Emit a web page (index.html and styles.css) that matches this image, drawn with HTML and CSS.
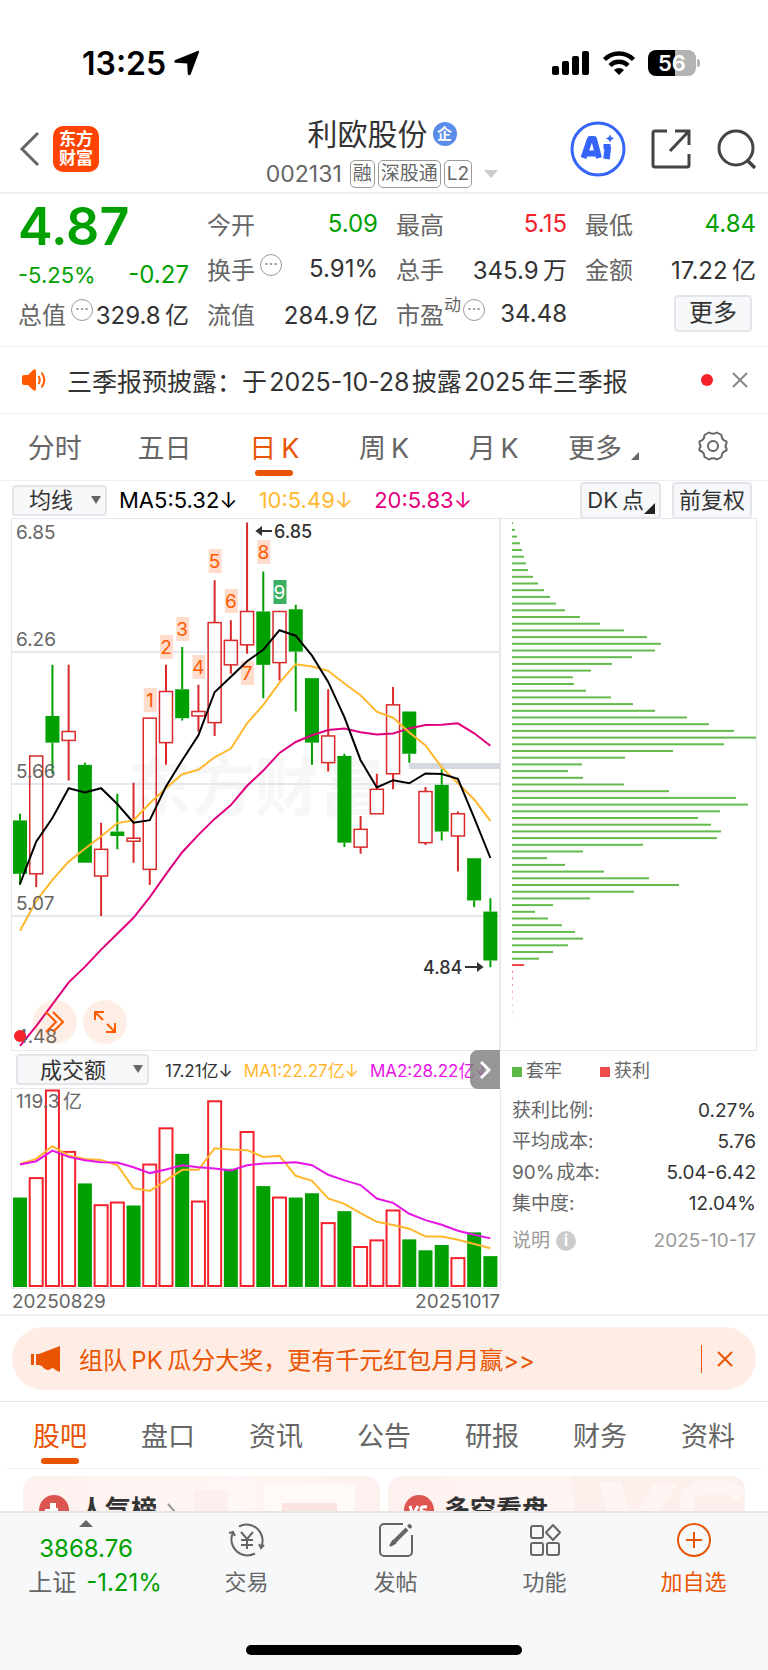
FILE: index.html
```html
<!DOCTYPE html>
<html lang="zh-CN">
<head>
  <meta charset="UTF-8">
  <meta name="viewport" content="width=device-width, initial-scale=1.0">
  <title>利欧股份 002131</title>
  <link rel="stylesheet" href="styles.css">
</head>
<body>
  <div class="app">
    <div class="status-bar">
      <div class="status-time">
        <span>13:25</span>
        <svg width="26" height="26" viewBox="0 0 26 26"><path d="M23.500 1c1-.5 1.900.2 1.500 1.300L16.800 24c-.7 1.700-3 1.500-3.100-.4L13.200 13.500 2 12.800c-2-.1-2.300-2-.7-2.900z" fill="#000"/></svg>
      </div>
      <div class="status-icons">
        <svg width="38" height="26" viewBox="0 0 38 26">
          <rect x="0" y="16" width="7" height="9" rx="2"/><rect x="10" y="11" width="7" height="14" rx="2"/>
          <rect x="20" y="6" width="7" height="19" rx="2"/><rect x="30" y="1" width="7" height="24" rx="2"/>
        </svg>
        <svg width="34" height="26" viewBox="0 0 34 26" fill="none" stroke="#000" stroke-width="4.500">
          <path d="M2.500 9.500a20.500 20.500 0 0 1 29 0"/><path d="M8 15.500a12.700 12.700 0 0 1 18 0"/>
          <path d="M17 25l-5-5a7 7 0 0 1 10 0z" fill="#000" stroke="none"/>
        </svg>
        <div class="battery"><span>56</span></div>
      </div>
    </div>

    <header class="title-bar">
      <div class="title-left">
        <a class="icon-link" href="#" aria-label="返回">
          <svg width="22" height="36" viewBox="0 0 22 36" fill="none" stroke="#666" stroke-width="3"><path d="M20 2L4 18l16 16"/></svg>
        </a>
        <a class="logo" href="#"><span>东方</span><span>财富</span></a>
      </div>
      <div class="title-center">
        <div class="stock-name"><h1>利欧股份</h1><span class="ent-badge">企</span></div>
        <div class="stock-code">
          <span>002131</span>
          <div class="code-tags"><span>融</span><span>深股通</span><span>L2</span></div>
          <i class="caret"></i>
        </div>
      </div>
      <div class="title-right">
        <button class="icon-btn" type="button" aria-label="AI">
          <svg width="56" height="56" viewBox="0 0 56 56" fill="none" stroke="#3565f8">
            <circle cx="28" cy="28" r="26" stroke-width="3"/>
            <path d="M13.500 37L20 18h4l5 19M16 32.500h11" stroke-width="6" stroke-linejoin="round"/>
            <path d="M38 25.500l-1.500 12.500" stroke-width="6.500"/><path d="M33.500 25.500h7" stroke-width="5"/>
            <path d="M40 13c.7 2.800 1.500 3.600 4.500 4.500-3 .9-3.800 1.700-4.500 4.500-.7-2.800-1.500-3.600-4.500-4.500 3-.9 3.800-1.700 4.500-4.500z" fill="#3565f8" stroke="none"/>
          </svg>
        </button>
        <button class="icon-btn" type="button" aria-label="分享">
          <svg width="40" height="40" viewBox="0 0 40 40" fill="none" stroke="#444" stroke-width="3">
            <path d="M16 2H4a2 2 0 0 0-2 2v32a2 2 0 0 0 2 2h32a2 2 0 0 0 2-2V25"/><path d="M24 2h14v14M37 3L19 22"/>
          </svg>
        </button>
        <button class="icon-btn" type="button" aria-label="搜索">
          <svg width="40" height="40" viewBox="0 0 40 40" fill="none" stroke="#444" stroke-width="3">
            <circle cx="20" cy="19" r="17"/><path d="M31 31l8 8" stroke-width="3.500"/>
          </svg>
        </button>
      </div>
    </header>

    <main class="content">
      <section class="quote">
        <div class="quote-col">
          <div class="price down">4.87</div>
          <div class="quote-change down"><span>-5.25%</span><b>-0.27</b></div>
          <div class="quote-row"><label>总值</label><i class="more-dot">···</i><b>329.8&thinsp;亿</b></div>
        </div>
        <div class="quote-col">
          <div class="quote-row"><label>今开</label><b class="down">5.09</b></div>
          <div class="quote-row"><label>换手</label><i class="more-dot">···</i><b>5.91%</b></div>
          <div class="quote-row"><label>流值</label><b>284.9&thinsp;亿</b></div>
        </div>
        <div class="quote-col">
          <div class="quote-row"><label>最高</label><b class="up">5.15</b></div>
          <div class="quote-row"><label>总手</label><b>345.9&thinsp;万</b></div>
          <div class="quote-row"><label>市盈</label><sup>动</sup><i class="more-dot tight">···</i><b>34.48</b></div>
        </div>
        <div class="quote-col">
          <div class="quote-row"><label>最低</label><b class="down">4.84</b></div>
          <div class="quote-row"><label>金额</label><b>17.22&thinsp;亿</b></div>
          <div class="quote-row"><button class="box-btn quote-more" type="button">更多</button></div>
        </div>
      </section>

      <section class="notice">
        <svg width="26" height="24" viewBox="0 0 26 24" fill="none" stroke="#ff5a00" stroke-width="2">
          <path d="M1 9q0-2 2-2h4l5-5q3-2 3 1v18q0 3-3 1l-5-5H3q-2 0-2-2z" fill="#ff5a00" stroke="none"/>
          <path d="M17.500 8q2.500 4 0 8M20.500 4.500q5.500 7.500 0 15"/>
        </svg>
        <p>三季报预披露：于&hairsp;2025-10-28&hairsp;披露&hairsp;2025&hairsp;年三季报</p>
        <i class="red-dot"></i>
        <button class="icon-btn" type="button" aria-label="关闭公告">
          <svg width="16" height="16" viewBox="0 0 16 16" stroke="#888" stroke-width="2"><path d="M1 1l14 14M15 1L1 15"/></svg>
        </button>
      </section>

      <nav class="tabs period-tabs">
        <button type="button">分时</button>
        <button type="button">五日</button>
        <button type="button" class="active">日&thinsp;K</button>
        <button type="button">周&thinsp;K</button>
        <button type="button">月&thinsp;K</button>
        <button type="button">更多<i class="corner"></i></button>
        <button type="button" aria-label="设置">
          <svg width="32" height="32" viewBox="0 0 32 32" fill="none" stroke="#666" stroke-width="2" stroke-linejoin="round">
            <path d="M12 2.500q4 2.500 8 0l4.500 2.500q0 5 5 6.500v2q-2 2.500 0 5v2q-5 1.500-5 6.500L20 29.500q-4-2.500-8 0L7.500 27q0-5-5-6.500v-2q2-2.500 0-5v-2q5-1.500 5-6.500z"/>
            <circle cx="16" cy="16" r="5"/>
          </svg>
        </button>
      </nav>

      <section class="ma-bar">
        <div class="select-wrap ma-select">
          <select aria-label="主图指标"><option>均线</option></select>
        </div>
        <span class="c-ma5">MA5:5.32<i>↓</i></span>
        <span class="c-ma10">10:5.49<i>↓</i></span>
        <span class="c-ma20">20:5.83<i>↓</i></span>
        <div class="ma-actions">
          <button class="box-btn dk-btn" type="button">DK&thinsp;点<i class="corner dark"></i></button>
          <button class="box-btn" type="button">前复权</button>
        </div>
      </section>

      <section class="charts">
        <div class="charts-left">
          <div class="kline">
            <svg id="kline" viewBox="0 0 488 531"></svg>
            <button class="round-btn" type="button" aria-label="展开">
              <svg width="20" height="24" viewBox="0 0 20 24" fill="none" stroke="#ff5a00" stroke-width="2"><path d="M1 2l10 10L1 22M8 2l10 10L8 22"/></svg>
            </button>
            <button class="round-btn second" type="button" aria-label="全屏">
              <svg width="24" height="24" viewBox="0 0 24 24" fill="none" stroke="#ff5a00" stroke-width="2"><path d="M2 10V2h9M2 2l8 8M22 13v9h-9M22 22l-8-8"/></svg>
            </button>
          </div>
          <div class="vol-bar">
            <div class="select-wrap vol-select">
              <select aria-label="副图指标"><option>成交额</option></select>
            </div>
            <span>17.21亿↓</span>
            <span class="c-ma10">MA1:22.27亿↓</span>
            <span class="c-vol2">MA2:28.22亿↓</span>
            <button class="vol-next" type="button" aria-label="下一个">
              <svg width="12" height="20" viewBox="0 0 12 20" fill="none" stroke="#fff" stroke-width="3"><path d="M2 2l8 8-8 8"/></svg>
            </button>
          </div>
          <svg id="volume" class="volume" viewBox="0 0 488 199"></svg>
          <div class="dates"><span>20250829</span><span>20251017</span></div>
        </div>

        <div class="charts-right">
          <svg id="chips" class="chips" viewBox="0 0 256 531"></svg>
          <div class="chip-info">
            <div class="legend"><span class="lg-green">套牢</span><span class="lg-red">获利</span></div>
            <dl>
              <div><dt>获利比例:</dt><dd>0.27%</dd></div>
              <div><dt>平均成本:</dt><dd>5.76</dd></div>
              <div><dt>90%&hairsp;成本:</dt><dd>5.04-6.42</dd></div>
              <div><dt>集中度:</dt><dd>12.04%</dd></div>
            </dl>
            <div class="chip-note"><span>说明</span><i>i</i><time>2025-10-17</time></div>
          </div>
        </div>
      </section>

      <section class="promo-wrap">
        <div class="promo">
          <svg width="30" height="26" viewBox="0 0 30 26" fill="#ea5504">
            <rect x="0" y="8" width="3" height="11"/><path d="M5 8h3L29 0v26l-5-2v-1l-3-1q-3 3-6 1.500T11 20l-3-1H5z"/>
          </svg>
          <a href="#">组队&thinsp;PK&thinsp;瓜分大奖，更有千元红包月月赢&gt;&gt;</a>
          <button type="button" aria-label="关闭">
            <svg width="16" height="16" viewBox="0 0 16 16" stroke="#ea5504" stroke-width="2"><path d="M1 1l14 14M15 1L1 15"/></svg>
          </button>
        </div>
      </section>

      <nav class="tabs info-tabs">
        <button type="button" class="active">股吧</button>
        <button type="button">盘口</button>
        <button type="button">资讯</button>
        <button type="button">公告</button>
        <button type="button">研报</button>
        <button type="button">财务</button>
        <button type="button">资料</button>
      </nav>

      <section class="cards">
        <a class="card" href="#">
          <svg class="card-art" width="210" height="60" viewBox="0 0 210 60"><path d="M24 14h34v46H24z" fill="#fdefed"/><path d="M95 8h90v52H95z" fill="#fff9f7"/><path d="M112 27h55v33h-55z" fill="#fbe3e0"/></svg>
          <svg width="30" height="30" viewBox="0 0 30 30"><circle cx="15" cy="15" r="15" fill="#dd5550"/><path d="M6 22v-8h5V8h6v5h2v3h5v6z" fill="#fff"/></svg>
          <b>人气榜</b>
          <svg width="10" height="18" viewBox="0 0 10 18" fill="none" stroke="#999" stroke-width="2"><path d="M1 1l7 8-7 8"/></svg>
        </a>
        <a class="card" href="#">
          <svg class="card-art" width="180" height="60" viewBox="0 0 180 60"><path d="M5 0h175v60H14z" fill="#fdefec"/><path d="M34 6h22l12 40L88 8h24L78 60H48z" fill="#fff6f4"/><path d="M176 20q-10-12-32-10t-22 18 20 20" fill="none" stroke="#fff6f4" stroke-width="14"/></svg>
          <svg width="30" height="30" viewBox="0 0 30 30" fill="none" stroke="#fff" stroke-width="3"><circle cx="15" cy="15" r="15" fill="#dd5550" stroke="none"/><path d="M6 11l3 9 5-9M23 12q-6-1-6 2t4 3-1 4h-5"/></svg>
          <b>多空看盘</b>
        </a>
      </section>
    </main>

    <footer class="bottom">
      <nav class="bottom-nav">
        <a class="index-item" href="#">
          <i class="caret-up"></i>
          <span class="down">3868.76</span>
          <span class="index-change">上证<em class="down">-1.21%</em></span>
        </a>
        <a href="#">
          <svg width="40" height="36" viewBox="0 0 40 36" fill="none" stroke="#666" stroke-width="2">
            <path d="M12 4.500a16 16 0 0 1 22 21M28 31.500a16 16 0 0 1-22-21"/><path d="M2 11l4-1 2 4M37 23l-3 3-2-4"/>
            <path d="M14 10l6 7 6-7M20 17v10M14 18h12M14 23h12"/>
          </svg>
          <span>交易</span>
        </a>
        <a href="#">
          <svg width="36" height="36" viewBox="0 0 36 36" fill="none" stroke="#666" stroke-width="2">
            <path d="M25 2H6a4 4 0 0 0-4 4v24a4 4 0 0 0 4 4h24a4 4 0 0 0 4-4V13"/><path d="M14 22L29 7" stroke-width="4"/><path d="M30.500 5.500l2.500-2.500" stroke-width="4"/><path d="M12 24l3-5 2 2z" fill="#666"/>
          </svg>
          <span>发帖</span>
        </a>
        <a href="#">
          <svg width="34" height="36" viewBox="0 0 34 36" fill="none" stroke="#666" stroke-width="2">
            <rect x="3" y="4" width="12" height="12" rx="2"/><rect x="3" y="21" width="12" height="12" rx="2"/><rect x="19" y="21" width="12" height="12" rx="2"/><path d="M25 3l7 7.500-7 7.500-7-7.500z" stroke-linejoin="round"/>
          </svg>
          <span>功能</span>
        </a>
        <a class="add" href="#">
          <svg width="36" height="36" viewBox="0 0 36 36" fill="none" stroke="#ea5504" stroke-width="2"><circle cx="18" cy="18" r="16"/><path d="M18 10v16M10 18h16"/></svg>
          <span>加自选</span>
        </a>
      </nav>
      <div class="home-indicator"></div>
    </footer>
  </div>
  <script src="script.js"></script>
</body>
</html>
```

FILE: styles.css
```css
* {
  box-sizing: border-box;
}

body {
  margin: 0;
  background: #fff;
  color: #333;
  font-family: Inter, "Noto Sans CJK SC", sans-serif;
  font-size: 24px;
}

h1, p, dl, dd {
  margin: 0;
}

b, i, em {
  font-weight: 400;
  font-style: normal;
}

a {
  color: inherit;
  text-decoration: none;
}

button, select {
  font: inherit;
  color: inherit;
  border: none;
  background: none;
  padding: 0;
  cursor: pointer;
}

svg {
  display: block;
  flex: none;
}

.app {
  height: 100vh;
  display: flex;
  flex-direction: column;
}

.down { color: #00a000; }
.up { color: #f5222d; }
.c-ma5 { color: #000; }
.c-ma10 { color: #ffb82e; }
.c-ma20 { color: #e6007e; }
.c-vol2 { color: #e614e6; }

/* status bar */
.status-bar {
  height: 106px;
  padding: 20px 72px 0 82px;
  display: flex;
  align-items: center;
  justify-content: space-between;
}

.status-time,
.status-icons {
  display: flex;
  align-items: center;
  gap: 8px;
  color: #000;
  font-size: 32px;
  font-weight: 600;
}

.status-icons {
  gap: 12px;
}

.battery {
  position: relative;
  width: 48px;
  height: 26px;
  border-radius: 8px;
  background: linear-gradient(to right, #000 56%, #b3b3b3 56%);
  color: #fff;
  font-size: 22px;
  line-height: 26px;
  text-align: center;
}

.battery::after {
  content: "";
  position: absolute;
  right: -4px;
  top: 9px;
  width: 3px;
  height: 8px;
  border-radius: 0 3px 3px 0;
  background: #b3b3b3;
}

/* title bar */
.title-bar {
  height: 88px;
  padding: 0 12px 0 18px;
  display: grid;
  grid-template-columns: 1fr auto 1fr;
  align-items: center;
  border-bottom: 2px solid #eee;
}

.title-left {
  display: flex;
  align-items: center;
  gap: 13px;
}

.logo {
  width: 46px;
  height: 46px;
  border-radius: 10px;
  background: #ff4400;
  color: #fff;
  font-size: 17px;
  font-weight: 700;
  line-height: 19px;
  display: flex;
  flex-direction: column;
  align-items: center;
  justify-content: center;
}

.title-center {
  display: flex;
  flex-direction: column;
  align-items: center;
  gap: 7px;
  margin-right: 10px;
  padding-top: 5px;
}

.stock-name {
  display: flex;
  align-items: center;
  gap: 5px;
}

.stock-name h1 {
  font-size: 30px;
  font-weight: 400;
  line-height: 38px;
}

.ent-badge {
  width: 24px;
  height: 24px;
  border-radius: 50%;
  background: #5a8cea;
  color: #fff;
  font-size: 15px;
  font-weight: 700;
  line-height: 23px;
  text-align: center;
}

.stock-code {
  display: flex;
  align-items: center;
  gap: 8px;
  color: #666;
  font-size: 23px;
}

.code-tags {
  display: flex;
  gap: 3px;
}

.code-tags span {
  border: 1px solid #999;
  border-radius: 5px;
  padding: 0 2px;
  font-size: 19px;
  line-height: 26px;
}

.caret {
  margin-left: 4px;
  border: 7px solid transparent;
  border-top: 8px solid #ccc;
  border-bottom: none;
}

.title-right {
  display: flex;
  align-items: center;
  justify-content: flex-end;
  gap: 25px;
}

.content {
  flex: 1;
  min-height: 0;
  overflow: hidden;
}

/* quote */
.quote {
  display: grid;
  grid-template-columns: repeat(4, 1fr);
  gap: 18px;
  padding: 7px 12px 10px 18px;
  border-bottom: 1px solid #eee;
}

.quote-row {
  height: 45px;
  display: flex;
  align-items: center;
}

.quote-row label {
  color: #666;
}

.quote-row b {
  margin-left: auto;
}

.quote-row sup {
  align-self: flex-start;
  color: #666;
  font-size: 17px;
  line-height: 28px;
}

.more-dot {
  width: 22px;
  height: 22px;
  margin: 0 0 8px 5px;
  border: 1px solid #999;
  border-radius: 50%;
  color: #888;
  font-size: 16px;
  line-height: 19px;
  text-align: center;
}

.more-dot.tight {
  margin-left: 2px;
}

.price {
  height: 50px;
  font-size: 52px;
  font-weight: 600;
  line-height: 52px;
}

.quote-change {
  height: 40px;
  padding-top: 7px;
  display: flex;
  align-items: center;
  justify-content: space-between;
  font-size: 22px;
}

.quote-change b {
  font-size: 24px;
}

.box-btn {
  border: 2px solid #e3e5ea;
  border-radius: 4px;
  background: #f7f8fa;
  padding: 0 5px 3px;
  height: 37px;
  line-height: 32px;
  white-space: nowrap;
}

.quote-more {
  width: 78px;
  margin: 0 4px 0 auto;
}

/* notice */
.notice {
  height: 67px;
  padding: 0 20px 0 21px;
  display: flex;
  align-items: center;
  border-bottom: 1px solid #eee;
  font-size: 25px;
}

.notice p {
  flex: 1;
  margin-left: 20px;
}

.red-dot {
  width: 12px;
  height: 12px;
  margin-right: 19px;
  border-radius: 50%;
  background: #f5222d;
}

/* tabs */
.tabs {
  display: flex;
  height: 67px;
  border-bottom: 1px solid #eee;
  color: #666;
  font-size: 27px;
}

.tabs button {
  position: relative;
  flex: 1;
  display: flex;
  align-items: center;
  justify-content: center;
  padding-bottom: 2px;
}

.tabs .active {
  color: #ea5504;
}

.tabs .active::after {
  content: "";
  position: absolute;
  left: calc(50% - 19px);
  bottom: 4px;
  width: 38px;
  height: 6px;
  border-radius: 3px;
  background: #ea5504;
}

.corner {
  align-self: flex-end;
  margin: 0 0 18px 9px;
  border-left: 8px solid transparent;
  border-bottom: 8px solid #666;
}

/* indicator bar */
.ma-bar {
  height: 38px;
  padding: 0 16px 0 12px;
  display: flex;
  align-items: center;
  gap: 21px;
  font-size: 22px;
}

.ma-bar > span {
  display: flex;
  white-space: nowrap;
}

.select-wrap {
  position: relative;
  height: 31px;
}

.select-wrap::after {
  content: "";
  position: absolute;
  right: 6px;
  top: 11px;
  border: 5px solid transparent;
  border-top: 8px solid #666;
  border-bottom: none;
  pointer-events: none;
}

.select-wrap select {
  appearance: none;
  width: 100%;
  height: 100%;
  border: 2px solid #e3e5ea;
  border-radius: 4px;
  background: #f7f8fa;
  font-size: 22px;
}

.ma-select {
  width: 95px;
  margin-right: -9px;
}

.ma-select select {
  padding-left: 15px;
}

.ma-actions {
  margin-left: auto;
  display: flex;
  gap: 11px;
}

.dk-btn {
  position: relative;
  padding-right: 15px;
}

.corner.dark {
  position: absolute;
  right: 4px;
  bottom: 3px;
  margin: 0;
  border-left-width: 11px;
  border-bottom: 11px solid #222;
}

/* charts */
.charts {
  display: grid;
  grid-template-columns: 61fr 32fr;
  padding: 0 12px;
  border-bottom: 2px solid #eee;
}

.charts-left,
.charts-right {
  min-width: 0;
}

.kline {
  position: relative;
  outline: 1px solid #e6e8ec;
}

.kline svg,
.volume,
.chips {
  overflow: visible;
}

#kline,
.volume,
.chips {
  width: 100%;
}

.volume,
.chips {
  outline: 1px solid #e6e8ec;
}

.round-btn {
  position: absolute;
  left: 21px;
  bottom: 6px;
  width: 44px;
  height: 44px;
  border-radius: 50%;
  background: rgba(255, 90, 0, 0.1);
  display: flex;
  align-items: center;
  justify-content: center;
}

.round-btn.second {
  left: 71px;
}

.vol-bar {
  position: relative;
  height: 39px;
  padding-left: 4px;
  display: flex;
  align-items: center;
  gap: 11px;
  overflow: hidden;
  font-size: 17px;
  white-space: nowrap;
}

.vol-select {
  flex: none;
  width: 133px;
  margin-right: 5px;
}

.vol-select select {
  padding-left: 22px;
}

.vol-next {
  position: absolute;
  right: 0;
  top: 0;
  width: 30px;
  height: 39px;
  border-radius: 8px 0 0 8px;
  background: rgba(128, 128, 128, 0.82);
  display: flex;
  align-items: center;
  justify-content: center;
}

.dates {
  height: 26px;
  display: flex;
  align-items: center;
  justify-content: space-between;
  color: #666;
  font-size: 19px;
}

.chip-info {
  padding: 7px 0 0 12px;
  font-size: 19px;
  line-height: 31px;
}

.legend {
  display: flex;
  gap: 38px;
  height: 38px;
  color: #666;
  font-size: 18px;
  line-height: 28px;
}

.legend span::before {
  content: "";
  display: inline-block;
  width: 10px;
  height: 10px;
  margin-right: 4px;
  background: #5cb946;
}

.legend .lg-red::before {
  background: #ee4b4b;
}

.chip-info dl div,
.chip-note {
  display: flex;
  align-items: center;
  justify-content: space-between;
}

.chip-info dt {
  color: #666;
}

.chip-note {
  margin-top: 6px;
  color: #999;
}

.chip-note time {
  margin-left: auto;
}

.chip-note i {
  width: 20px;
  height: 20px;
  margin-left: 6px;
  border-radius: 50%;
  background: #ccc;
  color: #fff;
  font-size: 15px;
  font-weight: 700;
  line-height: 20px;
  text-align: center;
}

/* promo */
.promo-wrap {
  padding: 11px 12px 11px;
  border-bottom: 1px solid #e6e6e6;
}

.promo {
  height: 63px;
  padding: 0 23px 0 19px;
  border-radius: 32px;
  background: #fdede4;
  color: #ea5504;
  display: flex;
  align-items: center;
  gap: 18px;
}

.promo a {
  flex: 1;
}

.promo button {
  height: 28px;
  padding-left: 15px;
  border-left: 1px solid #ea5504;
}

.info-tabs {
  margin: 0 6px;
}

/* cards */
.cards {
  display: grid;
  grid-template-columns: 1fr 1fr;
  gap: 8px;
  padding: 7px 23px;
}

.card {
  position: relative;
  height: 120px;
  padding: 11px 16px;
  border-radius: 14px;
  background: linear-gradient(to right, #fef1ef, #fff7f5 60%, #fef0ee);
  overflow: hidden;
  display: flex;
  align-items: flex-start;
  gap: 10px;
}

.card > * {
  position: relative;
}

.card svg {
  margin-top: 8px;
}

.card .card-art {
  position: absolute;
  right: 0;
  top: 0;
  margin: 0;
}

.card b {
  font-size: 26px;
  font-weight: 700;
  line-height: 46px;
}

.card b + svg {
  margin-top: 16px;
}

/* bottom */
.bottom {
  border-top: 2px solid #e6e6e8;
  background: #f7f8fa;
}

.bottom-nav {
  display: grid;
  grid-template-columns: 172px repeat(4, 1fr);
  height: 132px;
  color: #666;
  font-size: 22px;
}

.bottom-nav a {
  display: flex;
  flex-direction: column;
  align-items: center;
  padding-top: 9px;
  line-height: 32px;
}

.bottom-nav svg {
  margin-bottom: 8px;
}

.bottom-nav .index-item {
  padding-top: 7px;
  font-size: 24px;
  line-height: 34px;
}

.index-change {
  padding-left: 18px;
}

.index-item em {
  margin-left: 10px;
}

.bottom-nav .add {
  color: #ea5504;
}

.caret-up {
  margin-bottom: 5px;
  border: 7px solid transparent;
  border-top: none;
  border-bottom: 7px solid #666;
}

.home-indicator {
  width: 36%;
  height: 10px;
  margin: 0 auto 15px;
  border-radius: 5px;
  background: #000;
}
```

FILE: script.js
```js
// open, close, high, low
const candles = [
  [5.50, 5.26, 5.53, 5.21], [5.26, 5.79, 5.79, 5.20], [5.97, 5.85, 6.20, 5.71], [5.86, 5.90, 6.20, 5.68],
  [5.75, 5.31, 5.76, 5.31], [5.25, 5.37, 5.49, 5.07], [5.45, 5.43, 5.62, 5.37], [5.41, 5.42, 5.67, 5.31],
  [5.28, 5.96, 5.96, 5.21], [5.85, 6.08, 6.20, 5.75], [6.09, 5.96, 6.28, 5.95], [5.97, 5.99, 6.11, 5.90],
  [5.94, 6.39, 6.58, 5.88], [6.20, 6.31, 6.40, 6.16], [6.29, 6.44, 6.84, 6.25], [6.44, 6.20, 6.62, 6.05],
  [6.21, 6.44, 6.44, 6.13], [6.45, 6.26, 6.47, 5.99], [6.14, 5.85, 6.14, 5.75], [5.76, 5.88, 6.09, 5.72],
  [5.79, 5.40, 5.80, 5.38], [5.38, 5.46, 5.52, 5.35], [5.53, 5.64, 5.71, 5.53], [5.71, 6.02, 6.10, 5.64],
  [5.99, 5.80, 5.99, 5.76], [5.40, 5.63, 5.65, 5.39], [5.66, 5.45, 5.73, 5.41], [5.43, 5.53, 5.54, 5.27],
  [5.33, 5.14, 5.33, 5.11], [5.09, 4.87, 5.15, 4.84]
];

const ma5 = [5.214, 5.405, 5.511, 5.645, 5.626, 5.645, 5.574, 5.490, 5.501, 5.653, 5.771, 5.883, 6.077, 6.146, 6.216,
  6.268, 6.356, 6.331, 6.241, 6.123, 5.965, 5.771, 5.648, 5.681, 5.667, 5.711, 5.709, 5.687, 5.512, 5.331];
const ma10 = [5.004, 5.137, 5.233, 5.315, 5.373, 5.428, 5.488, 5.501, 5.577, 5.645, 5.708, 5.728, 5.784, 5.823, 5.937,
  6.020, 6.120, 6.203, 6.192, 6.173, 6.116, 6.063, 5.989, 5.962, 5.896, 5.837, 5.739, 5.667, 5.594, 5.498];
const ma20 = [4.486, 4.575, 4.673, 4.772, 4.841, 4.919, 4.990, 5.062, 5.155, 5.258, 5.357, 5.435, 5.507, 5.569, 5.656,
  5.724, 5.804, 5.853, 5.883, 5.907, 5.913, 5.897, 5.886, 5.891, 5.914, 5.929, 5.930, 5.937, 5.892, 5.836];

// turnover, negative = down bar
const volumes = [-53.9, 66.2, 119, 82, -62.4, 49.9, 51.5, -49.1, 74.4, 96.2, -80.2, 52.1, 112.5, -71.2, 94,
  -60.8, 54.5, -53.9, -56.5, 39.1, -45.7, 24.7, 28.7, 46.7, -28.7, -22.1, -25.3, 18, -32.9, -18.6];
const vma1 = [74.2, 77.2, 84.8, 79.2, 77.2, 76.6, 73.4, 59.5, 57.9, 64.2, 70.6, 70.6, 83.6, 82.8, 82.4,
  78.4, 79, 67, 64, 53.3, 50.1, 44.5, 39.3, 37.3, 35.1, 30.5, 30.5, 28.5, 25.9, 23.3];
const vma2 = [73.8, 75.8, 82.2, 78.4, 76.4, 75.2, 75, 72.2, 68.6, 70.8, 73.4, 72.2, 71.4, 70.2, 73.4,
  74.4, 74.8, 75.2, 73.4, 67.6, 64.2, 61.4, 53.3, 50.7, 44.1, 40.3, 37.5, 33.9, 31.5, 29.3];

const chips = [1, 3, 5, 8, 10, 12, 14, 16, 21, 26, 32, 38, 44, 53, 68, 88, 112, 135, 149, 143, 120, 100, 79, 61, 62,
  74, 99, 121, 143, 175, 197, 222, 244, 212, 161, 113, 70, 56, 71, 112, 157, 224, 236, 208, 186, 199, 209, 205, 131,
  71, 35, 53, 92, 137, 167, 122, 78, 41, 23, 36, 50, 63, 71, 56, 41, 27];

// candle index, centre y, label
const tags = [[8, 181, 1], [9, 128, 2], [10, 110, 3], [11, 148, 4], [12, 42, 5], [13, 82, 6], [14, 154, 7], [15, 33, 8], [16, 73, 9]];

const GREEN = "#00a000";
const RED = "#d9292b";
const cx = (i) => 8 + i * 16.22;
const priceY = (p) => (6.856 - p) * 222.3;
const volY = (v) => 198 - v / 119.3 * 198;

function line(values, toY, color) {
  const points = values.map((v, i) => `${cx(i).toFixed(1)},${toY(v).toFixed(1)}`).join(" ");
  return `<polyline points="${points}" fill="none" stroke="${color}" stroke-width="2"/>`;
}

function drawKline() {
  let s = `<text x="115" y="291" font-size="64" font-weight="700" fill="#f7f7f8">东方财富</text>`;
  [133, 265, 397].forEach((y) => {
    s += `<path d="M0 ${y}H488" stroke="#e4e7ee" stroke-width="2"/>`;
  });
  s += `<rect x="397" y="244" width="91" height="6" fill="#d5d8df"/>`;

  candles.forEach(([open, close, high, low], i) => {
    const x = cx(i);
    const top = priceY(Math.max(open, close));
    const bottom = priceY(Math.min(open, close));
    const h = Math.max(bottom - top, 3);
    const color = close >= open ? RED : GREEN;
    s += `<path d="M${x} ${priceY(high)}V${top}M${x} ${top + h}V${priceY(low)}" stroke="${color}" stroke-width="2"/>`;
    if (close >= open) {
      s += `<rect x="${x - 6.5}" y="${top}" width="13" height="${h}" fill="none" stroke="${color}" stroke-width="1.500"/>`;
    } else {
      s += `<rect x="${x - 7}" y="${top}" width="14" height="${h}" fill="${color}"/>`;
    }
  });

  tags.forEach(([i, y, n]) => {
    const last = n === 9;
    s += `<rect x="${cx(i) - 6}" y="${y - 12}" width="13" height="24" fill="${last ? "#3cb060" : "#ffdccb"}"/>`;
    s += `<text x="${cx(i)}" y="${y + 7}" font-size="19" text-anchor="middle" fill="${last ? "#fff" : "#ff5a00"}">${n}</text>`;
  });

  s += line(ma20, priceY, "#e0007f") + line(ma10, priceY, "#ffb82e") + line(ma5, priceY, "#000");

  [["6.85", 20], ["6.26", 127], ["5.66", 259], ["5.07", 391], ["4.48", 524]].forEach(([t, y]) => {
    s += `<text x="4" y="${y}" font-size="19" fill="#666">${t}</text>`;
  });
  s += `<circle cx="8" cy="517" r="6" fill="#f5222d"/>`;
  s += `<path d="M246 12h14M249 9l-4 3 4 3z" stroke="#333" stroke-width="2" fill="#333"/>`;
  s += `<text x="262" y="19" font-size="18" font-weight="500" fill="#333">6.85</text>`;
  s += `<path d="M453 448h14M466 445l4 3-4 3z" stroke="#333" stroke-width="2" fill="#333"/>`;
  s += `<text x="411" y="455" font-size="18" font-weight="500" fill="#333">4.84</text>`;
  document.querySelector("#kline").innerHTML = s;
}

function drawVolume() {
  let s = "";
  volumes.forEach((v, i) => {
    const x = cx(i);
    const y = volY(Math.abs(v));
    if (v > 0) {
      s += `<rect x="${x - 6.5}" y="${y + 1}" width="13" height="${196 - y}" fill="none" stroke="#f5222d" stroke-width="2"/>`;
    } else {
      s += `<rect x="${x - 7}" y="${y}" width="14" height="${198 - y}" fill="${GREEN}"/>`;
    }
  });
  s += line(vma1, volY, "#ffb82e") + line(vma2, volY, "#e614e6");
  s += `<text x="4" y="19" font-size="19" fill="#666">119.3\u2009亿</text>`;
  document.querySelector("#volume").innerHTML = s;
}

function drawChips() {
  let s = "";
  chips.forEach((w, i) => {
    s += `<rect x="12" y="${(3.2 + i * 6.7).toFixed(1)}" width="${w}" height="2" fill="#62bb4c"/>`;
  });
  s += `<rect x="12" y="445" width="12" height="2" fill="#ee4b4b"/>`;
  for (let i = 1; i <= 8; i++) {
    s += `<rect x="12" y="${(445 + i * 6.7).toFixed(1)}" width="1" height="2" fill="#ee4b4b" opacity="${0.9 - i * 0.1}"/>`;
  }
  document.querySelector("#chips").innerHTML = s;
}

drawKline();
drawVolume();
drawChips();
```
